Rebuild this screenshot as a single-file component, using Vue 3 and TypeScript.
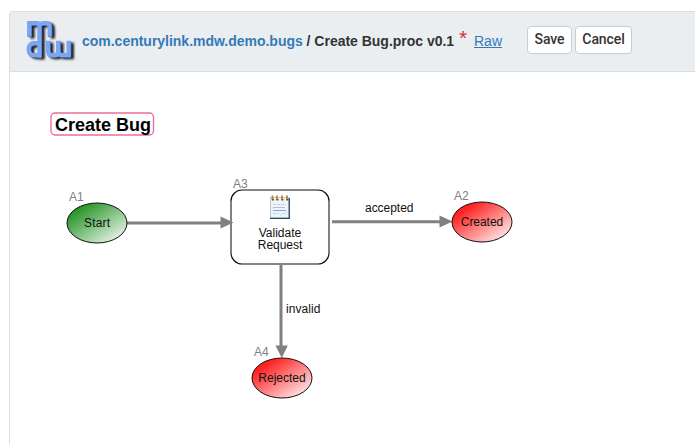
<script setup lang="ts">
interface OvalNode { id: string; label: string; cx: number; cy: number; fill: string; textWidth: number; idX: number; idY: number }

const ovals: OvalNode[] = [
  { id: 'A1', label: 'Start', cx: 97, cy: 151, fill: 'url(#startFill)', textWidth: 26, idX: 69, idY: 129 },
  { id: 'A2', label: 'Created', cx: 482, cy: 150, fill: 'url(#stopFill)', textWidth: 42.5, idX: 454, idY: 128 },
  { id: 'A4', label: 'Rejected', cx: 282, cy: 306, fill: 'url(#stopFill)', textWidth: 47.5, idX: 254, idY: 284 },
]
const rings: number[] = [272, 276.5, 281.5, 286.5]
</script>

<template>
  <main class="page">
    <section class="panel">
      <header class="heading">
        <svg class="logo" width="52" height="46" viewBox="0 0 52 46" aria-label="mdw">
          <defs>
            <filter id="soft" x="-20%" y="-20%" width="150%" height="150%">
              <feGaussianBlur stdDeviation="0.9" />
            </filter>
            <g id="mark" fill="none" stroke-width="4.2">
              <path d="M5.2 18.5V3M5.2 5.2H12Q15.4 5.2 15.4 8.5V39.5M15.4 7Q17 5.2 19 5.2H22Q25.6 5.2 25.6 9V18.5" />
              <path d="M15.4 25.2H10.5Q4.6 25.2 4.6 31.2Q4.6 37.2 10.5 37.2H15.4" />
              <path d="M24 22.8V32.5Q24 37.2 28 37.2H30.5Q34.2 37.2 34.2 33V22.8M34.2 33Q34.2 37.2 38 37.2H44.6M44.6 39.3V22.8" />
            </g>
          </defs>
          <use href="#mark" x="3.2" y="2" stroke="#151a25" filter="url(#soft)" />
          <use href="#mark" x="0.6" y="0.4" stroke="#4a6fb2" />
          <use href="#mark" stroke="#7ba6f2" />
        </svg>
        <div class="title"><a class="package">com.centurylink.mdw.demo.bugs</a> / Create Bug.proc v0.1</div>
        <span class="dirty">*</span>
        <a class="raw">Raw</a>
        <div class="actions">
          <button class="save" type="button">Save</button>
          <button class="cancel" type="button">Cancel</button>
        </div>
      </header>
      <svg class="diagram" width="685" height="372" viewBox="10 0 685 372">
        <defs>
          <linearGradient id="startFill" x1="0" y1="0" x2="1" y2="1">
            <stop offset="0.08" stop-color="#108a10" />
            <stop offset="0.88" stop-color="#e4f2e4" />
          </linearGradient>
          <linearGradient id="stopFill" x1="0" y1="0" x2="1" y2="1">
            <stop offset="0.2" stop-color="#ff2222" />
            <stop offset="0.88" stop-color="#ffe4e4" />
          </linearGradient>
        </defs>

        <rect x="51" y="41" width="102.5" height="22" rx="4" fill="#fff" stroke="#ef6d9c" stroke-width="1.4" />
        <text class="name" x="55" y="59" textLength="96">Create Bug</text>

        <rect x="231" y="118" width="98" height="74" rx="11" fill="#fff" stroke="#111" stroke-width="1.2" />
        <path d="M242 118H318M242 192H318M231 129V181M329 129V181" stroke="#858585" stroke-width="1.6" />

        <g stroke="#808080" stroke-width="3" fill="none">
          <path d="M127 151H222M332 149.8H441M281 193V275" />
        </g>
        <g fill="#808080">
          <path d="M220.5 144.5L233.5 150.5L220.5 156.5Z" />
          <path d="M439.5 143.5L452.5 149.5L439.5 155.5Z" />
          <path d="M275.5 273.5H287.8L281.8 286Z" />
        </g>

        <g v-for="node in ovals" :key="node.id">
          <ellipse :cx="node.cx" :cy="node.cy" rx="30" ry="20" :fill="node.fill" stroke="#111" stroke-width="1" />
          <text class="label" :x="node.cx - node.textWidth / 2" :y="node.cy + 4" :textLength="node.textWidth">{{ node.label }}</text>
          <text class="ident" :x="node.idX" :y="node.idY">{{ node.id }}</text>
        </g>

        <g fill="none">
          <rect x="270.5" y="125.5" width="18.5" height="20.5" fill="#eef4fc" stroke="#b3c8dc" />
          <path d="M270 146.3H289.3V126" stroke="#34495f" stroke-width="1.3" />
          <path d="M273 132.5H286M273 141.5H279" stroke="#c3cbd6" stroke-dasharray="3 1" />
          <path d="M273 135.5H285" stroke="#b5bfd0" />
          <path d="M273 138.5H286" stroke="#8f9fe0" />
          <path d="M281 143.5L283 141L284.5 142.5L287 139.5" stroke="#b9e2d3" />
          <path v-for="x in rings" :key="x" :d="`M${x + 0.5} 123.5V128`" stroke="#c58420" stroke-width="1.8" />
          <path v-for="x in rings" :key="`hole-${x}`" :d="`M${x + 1} 127V128.4`" stroke="#5f5544" stroke-width="2" />
        </g>
        <text class="ident" x="233" y="116">A3</text>
        <text class="label" x="280" y="165" text-anchor="middle">Validate</text>
        <text class="label" x="280" y="177" text-anchor="middle" textLength="44.5">Request</text>
        <text class="label" x="365" y="140" textLength="48.5">accepted</text>
        <text class="label" x="286" y="241" textLength="34.5">invalid</text>
      </svg>
    </section>
  </main>
</template>

<style>
body { background: #fff; overflow: hidden; }
</style>
<style scoped>
.page {
  box-sizing: border-box;
  height: 444px;
  padding: 11px 0 0 9px;
  overflow: hidden;
  font-family: "Liberation Sans", Arial, sans-serif;
}
.panel {
  box-sizing: border-box;
  height: 440px;
  border: 1px solid #ddd;
  border-right: 0;
  border-radius: 4px 0 0 0;
  overflow: hidden;
}
.heading {
  box-sizing: border-box;
  display: flex;
  align-items: flex-start;
  height: 60px;
  padding-left: 14px;
  background: #ebeef1;
  border-bottom: 1px solid #ddd;
  color: #333;
  font-size: 14px;
  line-height: 20px;
}
.logo { flex: none; margin-top: 6px; }
.title { flex: none; width: 372px; margin: 19px 0 0 6px; font-weight: 700; letter-spacing: -0.015px; white-space: nowrap; }
.package { color: #337ab7; }
.dirty { flex: none; width: 10px; margin: 16px 5px 0; color: #d9302c; font-size: 21px; line-height: 20px; }
.raw { flex: none; width: 28px; margin-top: 19px; color: #337ab7; text-decoration: underline; }
.actions { display: flex; gap: 3px; margin: 14px 0 0 25px; }
button {
  box-sizing: border-box;
  height: 28px;
  padding: 0 0 2px;
  border: 1px solid #ccc;
  border-radius: 4px;
  background: #fff;
  color: #333;
  font: 500 14px Roboto, sans-serif;
  letter-spacing: -0.1px;
}
.save { width: 45px; }
.cancel { width: 57px; }
.diagram { display: block; }
.name { font-size: 18px; font-weight: 700; fill: #000; }
.label { font-size: 12px; fill: #111; }
.ident { font-size: 12px; fill: #808080; }
</style>
